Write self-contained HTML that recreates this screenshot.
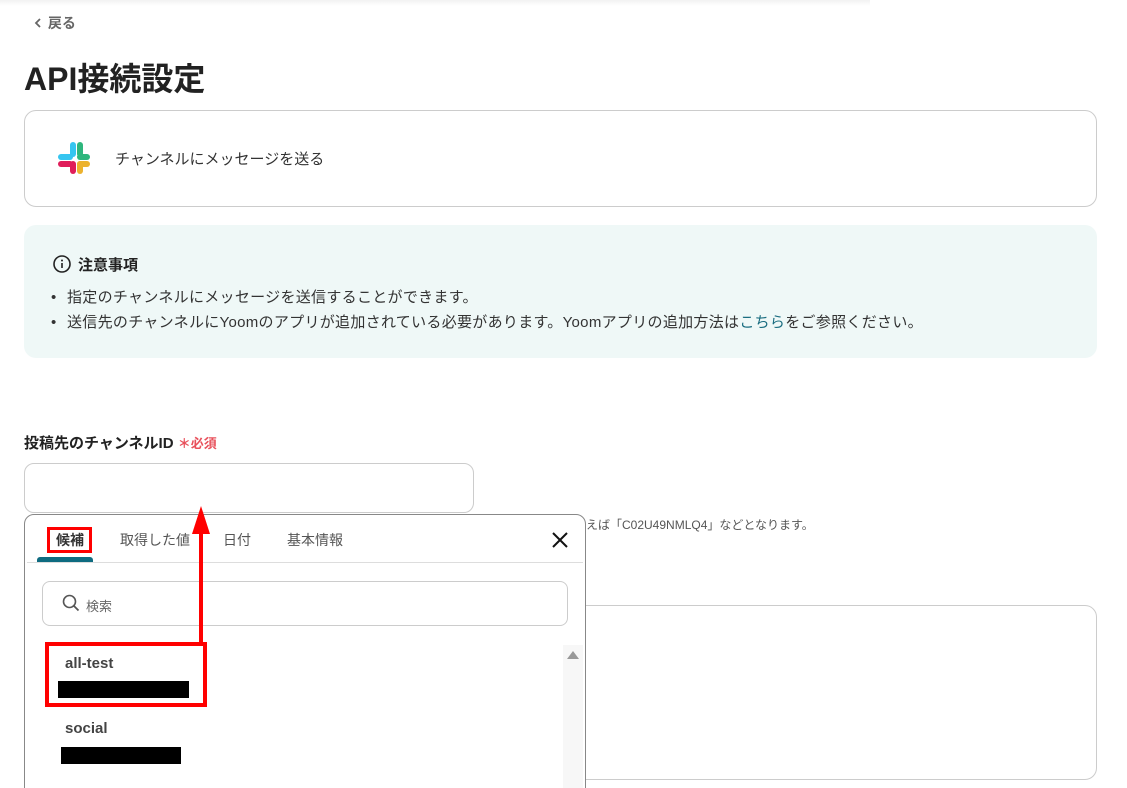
<!DOCTYPE html>
<html><head><meta charset="utf-8"><style>
*{margin:0;padding:0;box-sizing:border-box}
html,body{width:1127px;height:788px;overflow:hidden}
body{background:#fff;font-family:"Liberation Sans","Noto Sans CJK JP",sans-serif;color:#222;position:relative}
.a{position:absolute}
</style></head><body>
<div class="a" style="left:0;top:0;width:870px;height:6px;background:linear-gradient(#f2f2f2,#fff)"></div>
<div class="a" style="left:32px;top:13px;font-size:14px;color:#666;font-weight:bold">
<svg width="12" height="12" viewBox="0 0 12 12" style="vertical-align:-1px"><path d="M8 2 L4 6 L8 10" stroke="#666" stroke-width="1.8" fill="none"/></svg> 戻る</div>
<div class="a" style="left:24px;top:54px;font-size:32px;font-weight:bold;color:#222">API接続設定</div>
<div class="a" style="left:24px;top:110px;width:1073px;height:97px;border:1px solid #ccc;border-radius:12px"></div>
<svg class="a" style="left:57px;top:141px" width="34" height="34" viewBox="0 0 34 34">
<rect x="13" y="1" width="6" height="15" rx="3" fill="#36c5f0"/><rect x="1" y="13" width="15" height="6" rx="3" fill="#36c5f0"/>
<rect x="20" y="1" width="6" height="15" rx="3" fill="#2eb67d"/><rect x="20" y="13" width="13" height="6" rx="3" fill="#2eb67d"/>
<rect x="20" y="20" width="13" height="6" rx="3" fill="#ecb22e"/><rect x="20" y="20" width="6" height="13" rx="3" fill="#ecb22e"/>
<rect x="1" y="20" width="15" height="6" rx="3" fill="#e01e5a"/><rect x="13" y="20" width="6" height="13" rx="3" fill="#e01e5a"/>
</svg>
<div class="a" style="left:115px;top:148px;font-size:15px;color:#333">チャンネルにメッセージを送る</div>
<div class="a" style="left:24px;top:225px;width:1073px;height:133px;background:#eff8f7;border-radius:12px"></div>
<svg class="a" style="left:53px;top:255px" width="18" height="18" viewBox="0 0 18 18"><circle cx="9" cy="9" r="8" stroke="#222" stroke-width="1.6" fill="none"/><rect x="8.2" y="8" width="1.6" height="5" fill="#222"/><circle cx="9" cy="5.5" r="1" fill="#222"/></svg>
<div class="a" style="left:78px;top:254px;font-size:15px;font-weight:bold">注意事項</div>
<div class="a" style="left:51px;top:285px;font-size:15px;color:#333;line-height:25px;white-space:nowrap">
<div><span style="display:inline-block;width:16px">•</span><span style="letter-spacing:0.3px">指定のチャンネルにメッセージを送信することができます。</span></div>
<div><span style="display:inline-block;width:16px">•</span><span style="letter-spacing:0.3px">送信先のチャンネルにYoomのアプリが追加されている必要があります。Yoomアプリの追加方法は<span style="color:#1a6d80">こちら</span>をご参照ください。</span></div></div>
<div class="a" style="left:24px;top:432px;font-size:15px;font-weight:bold">投稿先のチャンネルID <span style="color:#e8505b;font-size:13px">＊必須</span></div>
<div class="a" style="left:24px;top:463px;width:450px;height:50px;border:1px solid #ccc;border-radius:10px"></div>
<div class="a" style="left:586px;top:516px;font-size:12px;color:#555">えば「C02U49NMLQ4」などとなります。</div>
<div class="a" style="left:570px;top:605px;width:527px;height:175px;border:1px solid #ccc;border-radius:12px"></div>
<div class="a" style="left:24px;top:514px;width:562px;height:300px;border:1px solid #888;border-radius:10px;background:#fff"></div>
<div class="a" style="left:56px;top:530px;font-size:14px;font-weight:bold;color:#333">候補</div>
<div class="a" style="left:120px;top:530px;font-size:14px;color:#555">取得した値</div>
<div class="a" style="left:223px;top:530px;font-size:14px;color:#555">日付</div>
<div class="a" style="left:287px;top:530px;font-size:14px;color:#555">基本情報</div>
<div class="a" style="left:37px;top:557px;width:56px;height:5px;background:#0e6b80;border-radius:3px 3px 0 0"></div>
<div class="a" style="left:27px;top:562px;width:556px;height:1px;background:#ddd"></div>
<svg class="a" style="left:551px;top:531px" width="18" height="18" viewBox="0 0 18 18"><path d="M2 2L16 16M16 2L2 16" stroke="#111" stroke-width="2"/></svg>
<div class="a" style="left:42px;top:581px;width:526px;height:45px;border:1px solid #ccc;border-radius:8px"></div>
<svg class="a" style="left:62px;top:594px" width="18" height="18" viewBox="0 0 18 18"><circle cx="7.5" cy="7.5" r="6" stroke="#555" stroke-width="1.6" fill="none"/><path d="M12 12L16.5 16.5" stroke="#555" stroke-width="1.8"/></svg>
<div class="a" style="left:86px;top:596px;font-size:13px;color:#666">検索</div>
<div class="a" style="left:563px;top:645px;width:20px;height:143px;background:#f7f7f7"></div>
<svg class="a" style="left:566px;top:650px" width="14" height="10"><path d="M7 1L13 9H1Z" fill="#999"/></svg>
<div class="a" style="left:65px;top:655px;font-size:15px;font-weight:bold;color:#444">all-test</div>
<div class="a" style="left:58px;top:681px;width:131px;height:17px;background:#000"></div>
<div class="a" style="left:65px;top:720px;font-size:15px;font-weight:bold;color:#444">social</div>
<div class="a" style="left:61px;top:747px;width:120px;height:17px;background:#000"></div>
<div class="a" style="left:45px;top:642px;width:162px;height:65px;border:4px solid #f00"></div>
<div class="a" style="left:47px;top:527px;width:45px;height:26px;border:3px solid #f00"></div>
<div class="a" style="left:199px;top:530px;width:4px;height:114px;background:#f00"></div>
<svg class="a" style="left:192px;top:506px" width="18" height="28"><path d="M9 0L18 28H0Z" fill="#f00"/></svg>
</body></html>
